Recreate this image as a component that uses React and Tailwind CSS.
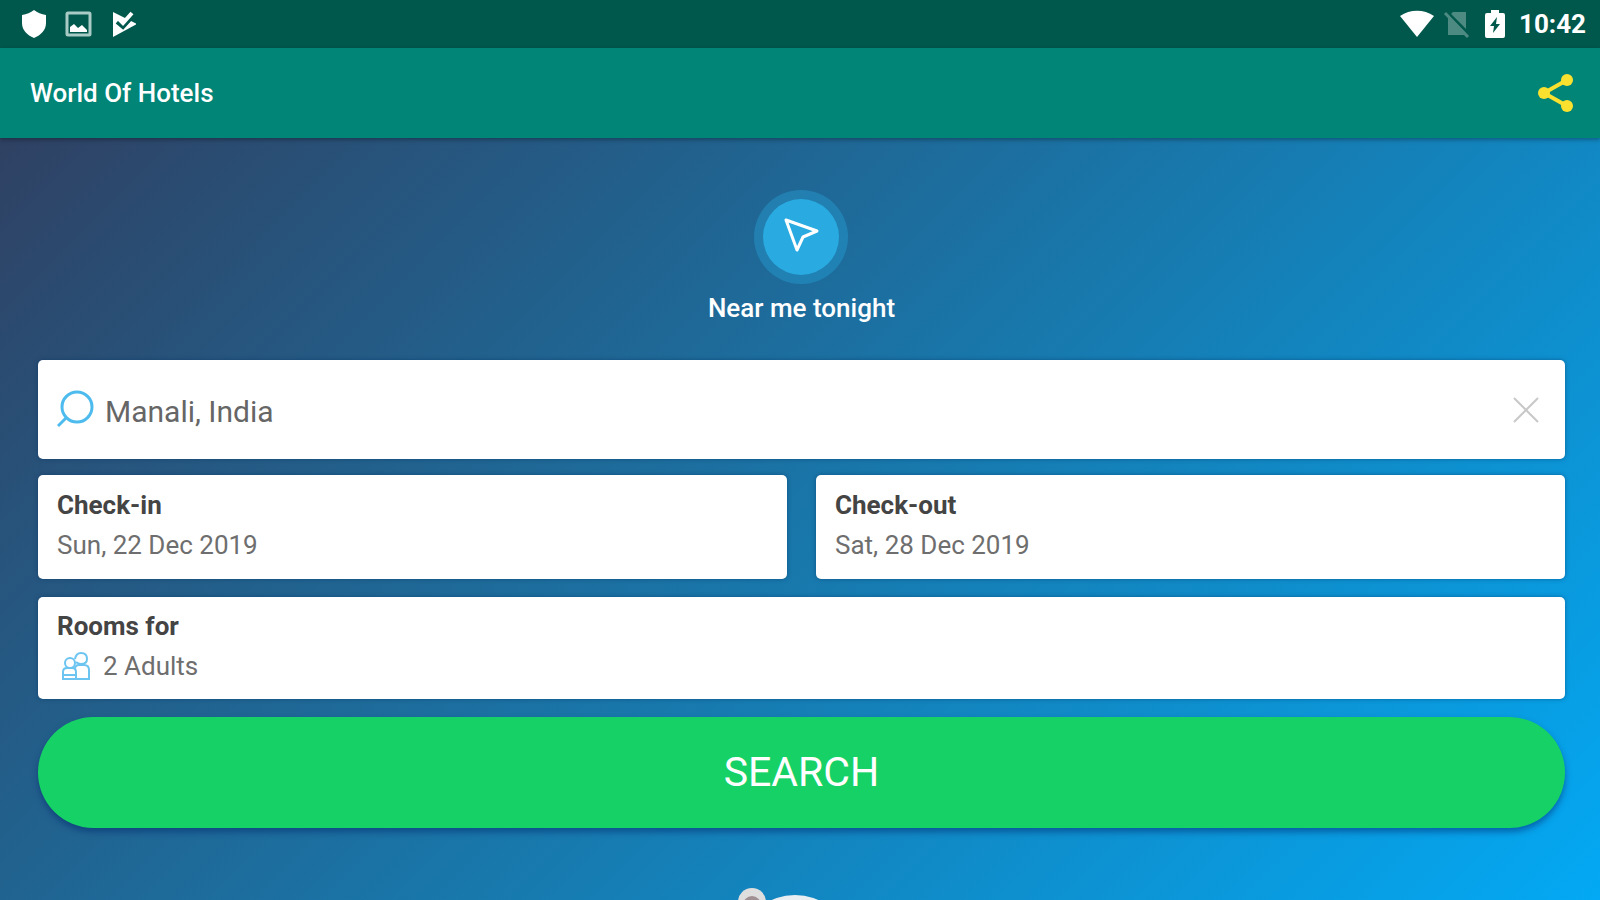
import { useState } from 'react';

function StatusBar() {
  return (
    <div className="flex h-12 shrink-0 items-center justify-between bg-[#00574b] pl-5 pr-[14px] text-white">
      <div className="flex items-center gap-4">
        <svg className="h-7 w-7" viewBox="0 0 28 28" fill="currentColor" aria-hidden="true">
          <path d="M14 0 Q19 4 26 5 V13 C26 20 21 25 14 28 C7 25 2 20 2 13 V5 Q9 4 14 0 Z" />
        </svg>
        <svg className="h-7 w-7" viewBox="0 0 28 28" aria-hidden="true">
          <rect x="3" y="3" width="23" height="22" rx="1" fill="none" stroke="#a9cbc6" strokeWidth="3" />
          <path d="M6 22 V17 L10 14 L14 18 L18 15 L23 20 V22 Z" fill="#fff" />
        </svg>
        <svg className="h-7 w-7" viewBox="0 0 28 28" aria-hidden="true">
          <path d="M5 2 L29 14 L5 27 Z" fill="#fff" />
          <path d="M9 12 L15 17 L26 5" fill="none" stroke="#00574b" strokeWidth="4" />
          <path d="M10 8 L15 13 L24 3" fill="none" stroke="#fff" strokeWidth="4" />
        </svg>
      </div>
      <div className="flex items-center">
        <svg className="h-7 w-9" viewBox="0 0 36 28" fill="currentColor" aria-hidden="true">
          <path d="M18 27 L1 6 C11 -1 25 -1 35 6 Z" />
        </svg>
        <svg className="ml-2 h-7 w-7" viewBox="0 0 28 28" aria-hidden="true">
          <path d="M10 2 H23 V25 H5 V7 Z" fill="#4d8a81" />
          <path d="M3 1 L27 25" stroke="#00574b" strokeWidth="3" />
          <path d="M2 3 L25 27" stroke="#4d8a81" strokeWidth="3" />
        </svg>
        <svg className="ml-3 h-7 w-6" viewBox="0 0 24 28" aria-hidden="true">
          <path d="M8 0 H16 V3 H20 Q22 3 22 5 V26 Q22 28 20 28 H4 Q2 28 2 26 V5 Q2 3 4 3 H8 Z" fill="#fff" />
          <path d="M14 7 L7 16 H11 L10 23 L17 14 H13 Z" fill="#00574b" />
        </svg>
        <span className="ml-3 text-[26px] leading-8 font-bold">10:42</span>
      </div>
    </div>
  );
}

function AppBar() {
  return (
    <header className="z-10 flex h-[90px] shrink-0 items-center justify-between bg-[#008577] pl-[30px] pr-6 shadow-[0_2px_4px_rgba(0,0,0,0.3)]">
      <h1 className="text-[26px] leading-8 font-medium text-white">World Of Hotels</h1>
      <button type="button" aria-label="Share" className="text-[#fbe12f]">
        <svg className="h-10 w-10" viewBox="0 0 40 40" fill="currentColor">
          <path d="M31 7 L8 20 L31 33" fill="none" stroke="currentColor" strokeWidth="4" />
          <circle cx="31" cy="7" r="6" />
          <circle cx="8" cy="20" r="6" />
          <circle cx="31" cy="33" r="6" />
        </svg>
      </button>
    </header>
  );
}

function DateCard({ label, value }) {
  return (
    <button
      type="button"
      className="h-[104px] rounded-[5px] bg-white px-[19px] pb-1 text-left shadow-[0_0_4px_rgba(0,50,100,0.5)]"
    >
      <span className="block text-[26px] leading-8 font-bold text-[#444]">{label}</span>
      <span className="mt-2 block text-[26px] leading-8 text-[#6e6e6e]">{value}</span>
    </button>
  );
}

export default function App() {
  const [place, setPlace] = useState('Manali, India');

  return (
    <div className="flex h-screen flex-col font-['Roboto',sans-serif]">
      <StatusBar />
      <AppBar />
      <main className="flex min-h-0 flex-1 flex-col overflow-hidden bg-[linear-gradient(135deg,#2f4163_0%,#1976a9_50%,#03a9f4_100%)] pr-[35px] pl-[38px]">
        {/* Near me */}
        <button type="button" className="mt-[52px] flex shrink-0 flex-col items-center self-center text-white">
          <span className="flex h-[94px] w-[94px] items-center justify-center rounded-full bg-[#29abe2]/35">
            <span className="flex h-[76px] w-[76px] items-center justify-center rounded-full bg-[#29abe2]">
              <svg className="h-10 w-10" viewBox="0 0 40 40" fill="none" stroke="#fff" strokeWidth="3" strokeLinejoin="round">
                <path d="M5 3 L36 14 L22 20 L16 33 Z" />
              </svg>
            </span>
          </span>
          <span className="mt-2 text-[26px] leading-8 font-medium">Near me tonight</span>
        </button>

        <form className="mt-9 flex shrink-0 flex-col" onSubmit={(e) => e.preventDefault()}>
          <div className="flex h-[99px] items-center rounded-[5px] bg-white pr-5 pl-[19px] shadow-[0_0_4px_rgba(0,50,100,0.5)]">
            <svg className="h-10 w-10 shrink-0" viewBox="0 0 40 40" fill="none" stroke="#4dbbed" strokeWidth="3" aria-hidden="true">
              <circle cx="20" cy="17" r="15" />
              <path d="M10 27 L1 36" />
            </svg>
            <input
              type="text"
              aria-label="Destination"
              className="ml-2 min-w-0 flex-1 bg-transparent pt-1 text-[30px] leading-9 text-[#666] outline-none"
              value={place}
              onChange={(e) => setPlace(e.target.value)}
            />
            <button type="button" aria-label="Clear" onClick={() => setPlace('')}>
              <svg className="h-9 w-9" viewBox="0 0 36 36" fill="none" stroke="#c8c8c8" strokeWidth="2">
                <path d="M5 6 L29 30 M29 6 L5 30" />
              </svg>
            </button>
          </div>

          <div className="mt-4 grid grid-cols-2 gap-[29px]">
            <DateCard label="Check-in" value="Sun, 22 Dec 2019" />
            <DateCard label="Check-out" value="Sat, 28 Dec 2019" />
          </div>

          <button
            type="button"
            className="mt-[18px] h-[102px] rounded-[5px] bg-white px-[19px] pb-1 text-left shadow-[0_0_4px_rgba(0,50,100,0.5)]"
          >
            <span className="block text-[26px] leading-8 font-bold text-[#444]">Rooms for</span>
            <span className="mt-2 flex items-center text-[26px] leading-8 text-[#6e6e6e]">
              <svg className="ml-1 h-8 w-8" viewBox="0 0 32 32" fill="none" stroke="#6cc5f0" strokeWidth="2" aria-hidden="true">
                <circle cx="9" cy="13" r="5" />
                <path d="M14 9 Q15 3 20 3 Q26 3 26 9 Q26 14 20 14 Q17 14 15 12" />
                <path d="M2 29 V22 Q2 18 6 18 H11 Q15 18 15 22 V29 Z" />
                <path d="M15 29 H28 V20 Q28 15 23 15 H18 Q14 15 14 19" />
                <path d="M2 25 H15" />
              </svg>
              <span className="ml-[10px]">2 Adults</span>
            </span>
          </button>

          <button
            type="submit"
            className="mt-[18px] h-[111px] rounded-full bg-[#16d266] text-[41px] leading-none text-white shadow-[0_4px_6px_rgba(0,40,110,0.5)]"
          >
            SEARCH
          </button>
        </form>

        {/* Mascot, cut off by the bottom edge */}
        <svg className="mt-[60px] h-24 w-32 shrink-0 self-center" viewBox="0 0 128 96" aria-hidden="true">
          <circle cx="14" cy="14" r="14" fill="#dedede" />
          <circle cx="14" cy="17" r="9" fill="#a08f93" />
          <ellipse cx="57" cy="47" rx="48" ry="40" fill="#e8eef2" />
        </svg>
      </main>
    </div>
  );
}
